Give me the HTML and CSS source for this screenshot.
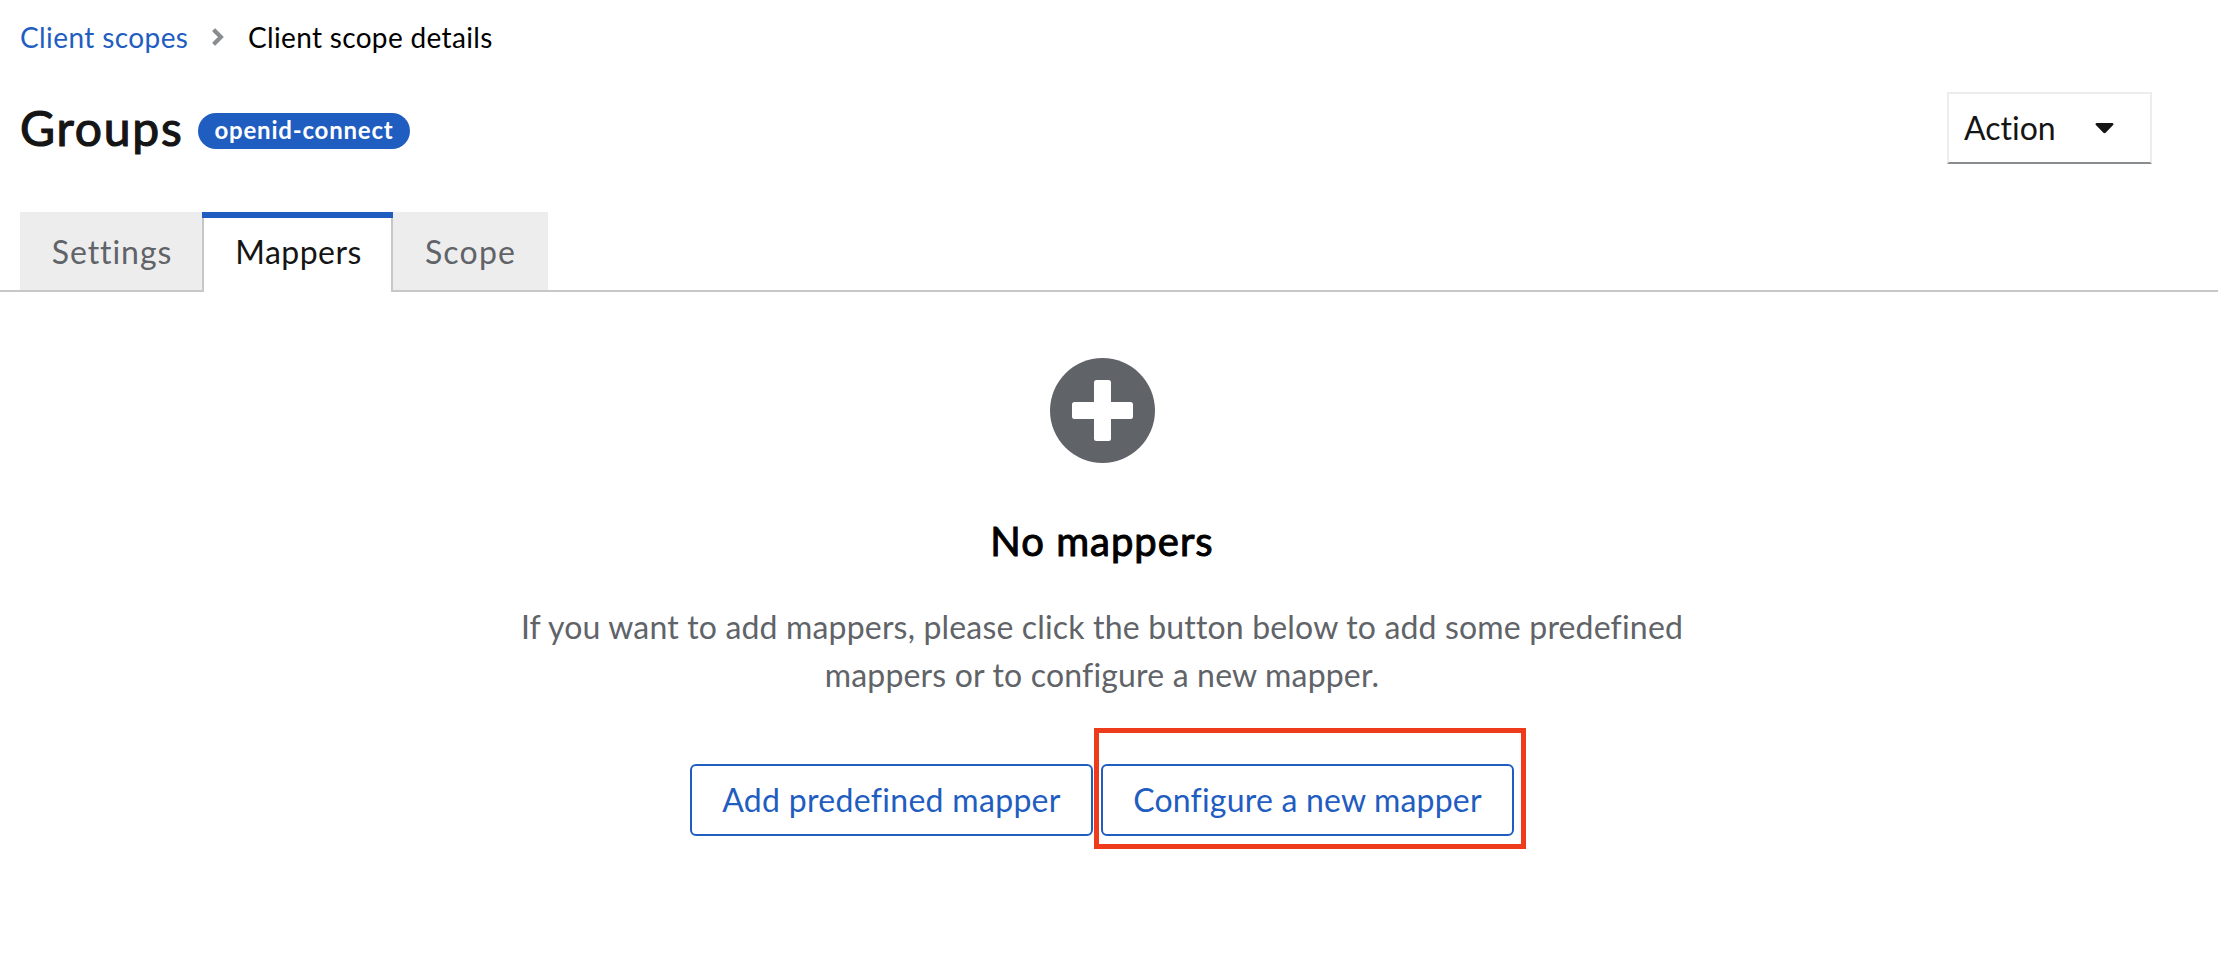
FILE: index.html
```
<!DOCTYPE html>
<html lang="en">
<head>
<meta charset="utf-8">
<title>Client scope details</title>
<link rel="stylesheet" href="styles.css">
</head>
<body>
<nav class="breadcrumb">
  <a class="crumb-link" href="#">Client scopes</a>
  <svg class="crumb-sep" viewBox="0 0 12 18"><path d="M1.200 3.100 3.100 1.200 10.800 9 3.100 16.800 1.200 14.900 7 9z" fill="#8a8d90" stroke="#8a8d90" stroke-width="1.600" stroke-linejoin="round"/></svg>
  <span class="crumb-current">Client scope details</span>
</nav>
<header class="header">
  <h1 class="title">Groups</h1>
  <span class="badge">openid-connect</span>
  <button class="action"><span>Action</span>
    <svg class="caret" viewBox="0 0 18 11"><path d="M1.300 0h15.400c1.200 0 1.700 1.300.9 2.100L10.100 9.800c-.6.600-1.600.600-2.200 0L.4 2.100C-.4 1.300.1 0 1.300 0z" fill="#151515"/></svg>
  </button>
</header>
<div class="tabs">
  <button class="tab tab-settings">Settings</button>
  <button class="tab tab-mappers">Mappers</button>
  <button class="tab tab-scope">Scope</button>
</div>
<main class="empty">
  <svg class="empty-icon" viewBox="0 0 105 105"><circle cx="52.500" cy="52.500" r="52.500" fill="#606368"/><path d="M46.500 22h12a2.500 2.500 0 0 1 2.500 2.500V44h19.500a2.500 2.500 0 0 1 2.500 2.500v12a2.500 2.500 0 0 1-2.500 2.500H61v19.500a2.500 2.500 0 0 1-2.500 2.500h-12a2.500 2.500 0 0 1-2.500-2.500V61H24.500a2.500 2.500 0 0 1-2.500-2.500v-12a2.500 2.500 0 0 1 2.500-2.500H44V24.500a2.500 2.500 0 0 1 2.500-2.500z" fill="#fff"/></svg>
  <h2 class="empty-title">No mappers</h2>
  <p class="empty-body">If you want to add mappers, please click the button below to add some predefined<br>mappers or to configure a new mapper.</p>
  <div class="buttons">
    <button class="btn btn-add">Add predefined mapper</button>
    <div class="marked"><button class="btn btn-configure">Configure a new mapper</button></div>
  </div>
</main>
</body>
</html>
```
FILE: styles.css
```
* { box-sizing: border-box; }
body {
  margin: 0;
  min-height: 960px;
  background: #fff;
  color: #151515;
  font-family: Lato, "Open Sans", sans-serif;
  font-size: 32px;
  font-variant-ligatures: none;
}
button { font: inherit; color: inherit; background: none; border: 0; padding: 0; margin: 0; }
.breadcrumb {
  display: flex;
  align-items: center;
  height: 74px;
  padding-left: 20px;
  font-size: 28px;
  letter-spacing: .4px;
  color: #000;
}
.crumb-link { width: 192px; color: #1f5dc1; text-decoration: none; }
.crumb-sep { width: 12px; height: 18px; margin-right: 24px; }
.crumb-current { letter-spacing: .33px; }
.header {
  display: flex;
  align-items: center;
  height: 110px;
  padding: 0 66px 2px 20px;
}
.title {
  width: 178px;
  margin: 0 0 1px;
  font-size: 48px;
  font-weight: 400;
  letter-spacing: 1.8px;
  line-height: 58px;
  -webkit-text-stroke: 1.2px #151515;
}
.badge {
  width: 212px;
  height: 36px;
  margin-top: 5px;
  border-radius: 18px;
  background: #1f5dc1;
  color: #fff;
  font-size: 24px;
  font-weight: 700;
  letter-spacing: .8px;
  line-height: 34px;
  text-align: center;
}
.action {
  display: flex;
  align-items: center;
  width: 205px;
  height: 72px;
  margin-left: auto;
  padding: 0 36px 2px 15px;
  border: 2px solid #ededed;
  border-bottom-color: #8a8d90;
  justify-content: space-between;
}
.caret { width: 19px; height: 11px; margin-top: 3px; }
.tabs {
  display: flex;
  height: 80px;
  margin-top: 28px;
  padding-left: 20px;
  box-shadow: inset 0 -2px #c7c7c7;
}
.tab {
  height: 78px;
  background: #ededed;
  color: #606368;
  letter-spacing: .45px;
}
.tab-settings { width: 182px; letter-spacing: .95px; padding-left: 2px; }
.tab-mappers {
  width: 191px;
  height: 80px;
  background: #fff;
  color: #151515;
  box-shadow: inset 0 6px #1f5dc1, inset 2px 0 #c7c7c7, inset -2px 0 #c7c7c7;
  padding: 0 0 2px 2px;
}
.tab-scope { width: 155px; letter-spacing: 1.2px; }
.empty {
  display: flex;
  flex-direction: column;
  align-items: center;
  padding: 66px 14px 0 0;
}
.empty-icon { width: 105px; height: 105px; }
.empty-title {
  margin: 54px 0 38px;
  color: #000;
  font-size: 40px;
  font-weight: 400;
  letter-spacing: 1px;
  line-height: 48px;
  -webkit-text-stroke: 1px #000;
}
.empty-body {
  margin: 0;
  color: #606368;
  letter-spacing: .17px;
  line-height: 48px;
  text-align: center;
  white-space: nowrap;
}
.buttons { display: flex; gap: 8px; margin-top: 65px; }
.btn {
  height: 72px;
  border: 2px solid #1f5dc1;
  border-radius: 6px;
  padding-bottom: 2px;
  color: #1f5dc1;
  letter-spacing: .3px;
}
.btn-add { width: 403px; }
.btn-configure { width: 413px; display: block; letter-spacing: .2px; }
.marked { position: relative; }
.marked::after {
  content: "";
  position: absolute;
  inset: -36px -12px -13px -7px;
  border: 5px solid #ee3b1c;
}
```
